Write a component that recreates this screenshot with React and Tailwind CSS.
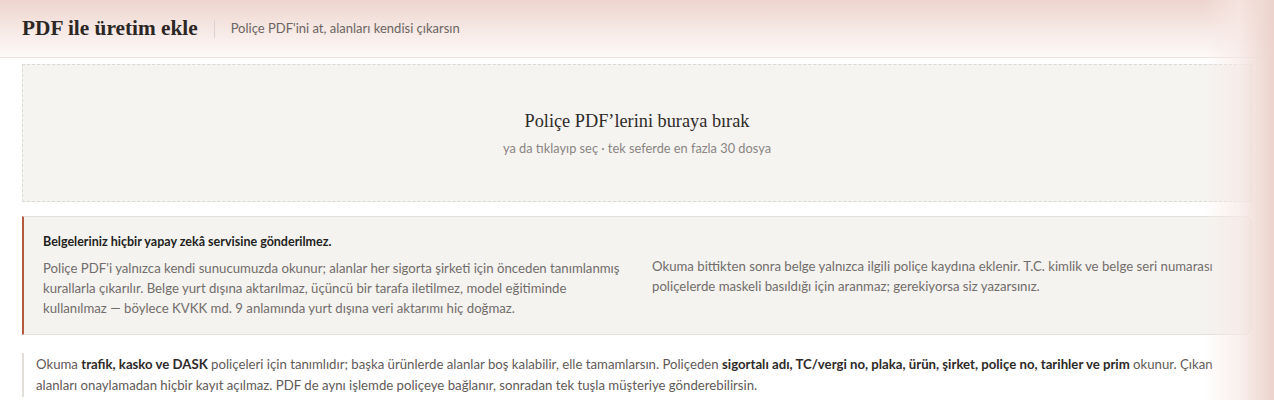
const sans = "font-['Lato','Open_Sans',sans-serif]";
const serif = "font-['Liberation_Serif','DejaVu_Serif',serif]";

const Header = () => (
  <header className="h-[58px] flex items-center px-[22px] bg-gradient-to-b from-[#eed5ce] to-[#fdfaf9] border-b border-[#ece3df]">
    <h1 className={`${serif} text-[21.3px] font-bold text-[#2b2725]`}>PDF ile üretim ekle</h1>
    <span className="ml-4 mr-4 h-[18px] w-px bg-[#dcd2ce]" />
    <p className={`${sans} text-[13px] text-[#6b6562]`}>Poliçe PDF'ini at, alanları kendisi çıkarsın</p>
  </header>
);

const DropZone = () => (
  <div className="h-[138px] flex flex-col items-center justify-center border border-dashed border-[#dcd9d5] bg-[#f5f4f1] cursor-pointer">
    <p className={`${serif} text-[18.3px] text-[#2f2b29]`}>Poliçe PDF’lerini buraya bırak</p>
    <p className={`${sans} text-[12.8px] text-[#8a8582] mt-[4px]`}>ya da tıklayıp seç · tek seferde en fazla 30 dosya</p>
  </div>
);

const PrivacyNote = () => (
  <div className={`${sans} grid grid-cols-2 items-center gap-[30px] pl-[19px] pr-5 pt-4 pb-4 bg-[#f4f3f0] border border-[#e4e0dc] border-l-2 border-l-[#b35a3c] rounded-r-lg`}>
    <div>
      <p className="text-[12.5px] font-bold text-[#231f1d] leading-[18px]">Belgeleriniz hiçbir yapay zekâ servisine gönderilmez.</p>
      <p className="mt-[7px] text-[13.2px] leading-[20px] text-[#726d6a]">
        Poliçe PDF'i yalnızca kendi sunucumuzda okunur; alanlar her sigorta şirketi için önceden tanımlanmış kurallarla çıkarılır. Belge yurt dışına aktarılmaz, üçüncü bir tarafa iletilmez, model eğitiminde kullanılmaz — böylece KVKK md. 9 anlamında yurt dışına veri aktarımı hiç doğmaz.
      </p>
    </div>
    <p className="text-[13.2px] leading-[20px] text-[#726d6a]">
      Okuma bittikten sonra belge yalnızca ilgili poliçe kaydına eklenir. T.C. kimlik ve belge seri numarası poliçelerde maskeli basıldığı için aranmaz; gerekiyorsa siz yazarsınız.
    </p>
  </div>
);

const ScopeNote = () => (
  <div className={`${sans} border-l-2 border-[#e2dfdb] pl-3 pr-3 py-[1px] text-[13.2px] leading-[21px] text-[#5f5a57]`}>
    Okuma <b className="text-[#2e2a28]">trafik, kasko ve DASK</b> poliçeleri için tanımlıdır; başka ürünlerde alanlar boş kalabilir, elle tamamlarsın. Poliçeden <b className="text-[#2e2a28]">sigortalı adı, TC/vergi no, plaka, ürün, şirket, poliçe no, tarihler ve prim</b> okunur. Çıkan alanları onaylamadan hiçbir kayıt açılmaz. PDF de aynı işlemde poliçeye bağlanır, sonradan tek tuşla müşteriye gönderebilirsin.
  </div>
);

export default function App() {
  return (
    <div className="relative min-h-[400px] bg-white overflow-hidden">
      <Header />
      <main className="pl-[22px] pr-[22px] pt-[6px] flex flex-col">
        <DropZone />
        <div className="mt-[14px]">
          <PrivacyNote />
        </div>
        <div className="mt-[18px]">
          <ScopeNote />
        </div>
      </main>
      <div className="pointer-events-none absolute inset-y-0 right-0 w-[70px] bg-gradient-to-r from-transparent via-[#f7e9e5]/70 to-[#ecd3cc]" />
    </div>
  );
}
